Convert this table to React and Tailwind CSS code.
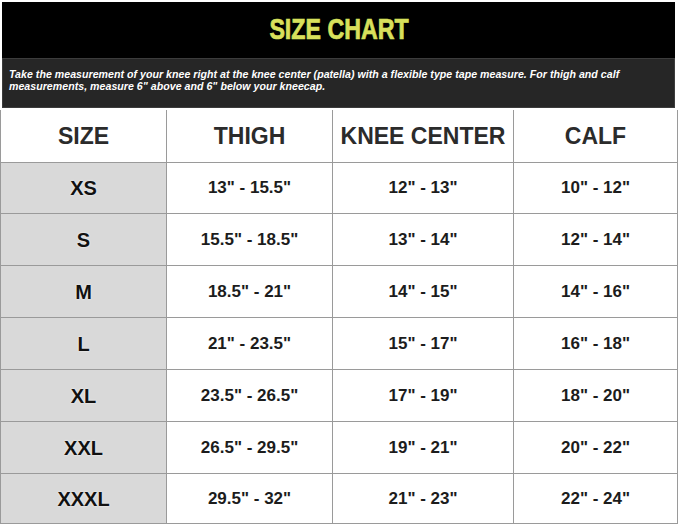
import React from "react";

const rows = [
  ["XS", '13" - 15.5"', '12" - 13"', '10" - 12"', "h-[51px]"],
  ["S", '15.5" - 18.5"', '13" - 14"', '12" - 14"', "h-[52px]"],
  ["M", '18.5" - 21"', '14" - 15"', '14" - 16"', "h-[52px]"],
  ["L", '21" - 23.5"', '15" - 17"', '16" - 18"', "h-[52px]"],
  ["XL", '23.5" - 26.5"', '17" - 19"', '18" - 20"', "h-[52px]"],
  ["XXL", '26.5" - 29.5"', '19" - 21"', '20" - 22"', "h-[52px]"],
  ["XXXL", '29.5" - 32"', '21" - 23"', '22" - 24"', "h-[50px]"],
];

const headers = ["SIZE", "THIGH", "KNEE CENTER", "CALF"];

export default function App() {
  return (
    <div className="w-[679px] h-[525px] bg-white overflow-hidden font-['Liberation_Sans',Arial,sans-serif]">
      <div className="ml-[2px] mt-[2px] w-[673px]">
        <div className="h-[56px] bg-black flex items-start justify-center pt-[12px]">
          <span className="text-[29px] leading-[30px] font-bold text-[#d8e05c] scale-x-[0.8] [-webkit-text-stroke:0.7px_#d8e05c]">
            SIZE CHART
          </span>
        </div>
        <div className="h-[50px] bg-[#262626] border border-[#3c3c3c] pl-[6px] pt-[9px]">
          <p className="text-[10.6px] leading-[12px] font-bold italic text-white tracking-[0.03px]">
            Take the measurement of your knee right at the knee center (patella) with a flexible type tape measure. For thigh and calf
            <br />
            measurements, measure 6" above and 6" below your kneecap.
          </p>
        </div>
      </div>
      <div className="mt-[2px] w-[678px] border-l border-[#9a9a9a] grid grid-cols-[166px_166px_181px_164px]">
        {headers.map((h) => (
          <div
            key={h}
            className="h-[53px] border-r border-b border-[#9a9a9a] flex items-center justify-center text-[23px] font-bold text-[#2b2b2b]"
          >
            {h}
          </div>
        ))}
        {rows.map((r) => (
          <React.Fragment key={r[0]}>
            <div
              className={`${r[4]} bg-[#d9d9d9] border-r border-b border-[#9a9a9a] flex items-center justify-center text-[20px] font-bold text-[#111] [text-shadow:0_0_2px_#fff]`}
            >
              {r[0]}
            </div>
            {r.slice(1, 4).map((c, i) => (
              <div
                key={i}
                className={`${r[4]} border-r border-b border-[#9a9a9a] flex items-center justify-center text-[17px] font-bold text-[#1c1c1c]`}
              >
                {c}
              </div>
            ))}
          </React.Fragment>
        ))}
      </div>
    </div>
  );
}
